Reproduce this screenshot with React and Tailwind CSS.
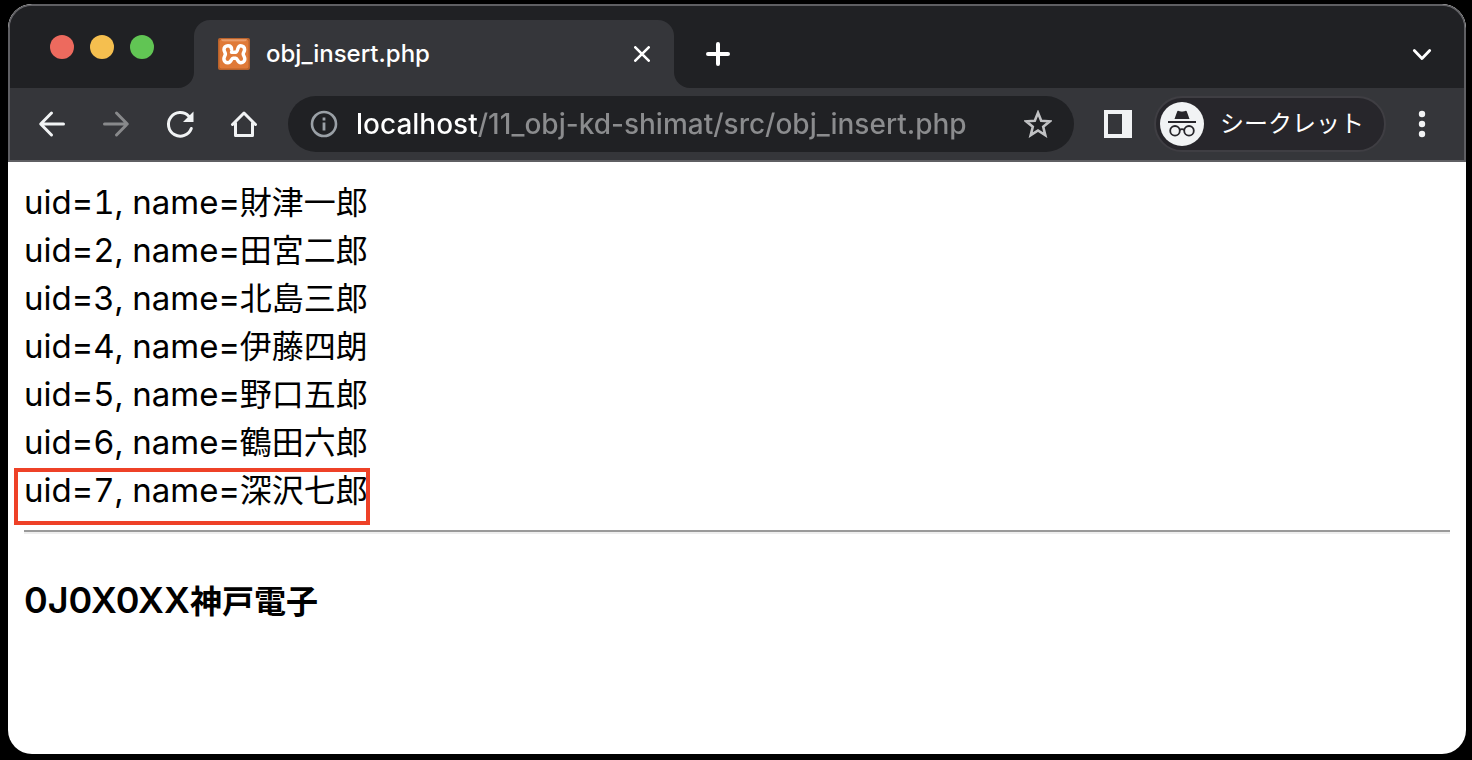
import React from "react";

const rows = [
  { uid: 1, name: "財津一郎" },
  { uid: 2, name: "田宮二郎" },
  { uid: 3, name: "北島三郎" },
  { uid: 4, name: "伊藤四朗" },
  { uid: 5, name: "野口五郎" },
  { uid: 6, name: "鶴田六郎" },
  { uid: 7, name: "深沢七郎", marked: true },
];

function XamppIcon() {
  return (
    <svg viewBox="0 0 32 32" className="size-8 shrink-0" aria-hidden="true">
      <defs>
        <linearGradient id="gloss" x1="0" y1="0" x2="0" y2="1">
          <stop offset="0" stopColor="#f3b58c" />
          <stop offset="1" stopColor="#e07a38" />
        </linearGradient>
      </defs>
      <rect width="32" height="32" rx="2" fill="#b9622b" />
      <rect x="1.5" y="1.5" width="29" height="29" rx="2" fill="#e07a38" />
      <path d="M3 1.500h26c-1 2.500-3 2.500-5 2.500H8C6 4 4 4 3 1.500z" fill="url(#gloss)" />
      <path
        d="M13.600 11.500C13.600 9.200 12.200 7.700 10 7.700C7.600 7.700 6 9.400 6 11.600C6 13.600 7.400 14.500 7.400 16C7.400 17.600 5.900 18.600 5.900 20.900C5.900 23.200 7.600 24.700 9.900 24.700C13.600 24.700 13 20.300 15 20.300H17.800C19.800 20.300 19.200 24.700 22.900 24.700C25.200 24.700 26.800 23.100 26.800 20.900C26.800 18.600 25.200 17.600 25.200 16C25.200 14.500 26.600 13.700 26.600 11.600C26.600 9.300 25 7.700 22.700 7.700C18.800 7.700 20.400 14.200 17.600 14.200H13.500"
        fill="none"
        stroke="#fff"
        strokeWidth="3.500"
        strokeLinecap="round"
        strokeLinejoin="round"
      />
    </svg>
  );
}

function TabFoot({ className, d }) {
  return (
    <svg viewBox="0 0 16 16" className={"absolute bottom-0 size-4 " + className} aria-hidden="true">
      <path d={d} fill="#35363a" />
    </svg>
  );
}

function TabStrip() {
  return (
    <div className="flex h-[82px] items-end bg-[#202124] pl-10 pr-[30px]">
      <div className="mb-[29px] flex gap-4">
        <button aria-label="閉じる" className="size-6 rounded-full bg-[#ed6a5e]" />
        <button aria-label="最小化" className="size-6 rounded-full bg-[#f5bf4f]" />
        <button aria-label="最大化" className="size-6 rounded-full bg-[#61c554]" />
      </div>
      <div className="relative ml-10 flex h-[68px] w-[480px] items-center rounded-t-2xl bg-[#35363a] pl-6 pr-5">
        <TabFoot className="-left-4" d="M16 0V16H0A16 16 0 0 0 16 0z" />
        <XamppIcon />
        <span className="ml-4 flex-1 text-2xl font-medium text-white">obj_insert.php</span>
        <button aria-label="タブを閉じる" className="flex size-6 items-center justify-center">
          <svg viewBox="0 0 16 16" className="size-4" stroke="#fff" strokeWidth="2.600" strokeLinecap="round">
            <path d="M1.300 1.300l13.400 13.400M14.700 1.300L1.300 14.700" />
          </svg>
        </button>
        <TabFoot className="-right-4" d="M0 0V16H16A16 16 0 0 1 0 0z" />
      </div>
      <button aria-label="新しいタブ" className="ml-8 flex h-[68px] items-center">
        <svg viewBox="0 0 24 24" className="size-6" stroke="#fff" strokeWidth="4" strokeLinecap="round">
          <path d="M12 2v20M2 12h20" />
        </svg>
      </button>
      <button aria-label="タブを検索" className="ml-auto flex h-[68px] items-center">
        <svg viewBox="0 0 24 24" className="size-6" fill="none" stroke="#fff" strokeWidth="2.800" strokeLinecap="round" strokeLinejoin="round">
          <path d="M4.300 8.500L12 16.500l7.700-8" />
        </svg>
      </button>
    </div>
  );
}

function NavButton({ label, children }) {
  return (
    <button aria-label={label} className="flex h-14 w-16 items-center justify-center">
      <svg viewBox="0 0 32 32" className="size-8" fill="none" stroke="#f1f3f4" strokeWidth="3" strokeLinecap="round" strokeLinejoin="round">
        {children}
      </svg>
    </button>
  );
}

function Toolbar() {
  return (
    <div className="flex h-[72px] items-center bg-[#35363a] pl-2.5 pr-[30px]">
      <NavButton label="戻る">
        <path d="M27.500 16H5M15.500 5L4.700 16l10.800 11" />
      </NavButton>
      <NavButton label="進む">
        <path d="M4.500 16H27M16.500 5l10.800 11-10.800 11" stroke="#88898b" />
      </NavButton>
      <NavButton label="再読み込み">
        <path d="M27.300 20.500A11.800 11.800 0 1 1 24.800 8.200" />
        <path d="M29.500 3.500V14H19z" fill="#f1f3f4" stroke="none" />
      </NavButton>
      <NavButton label="ホーム">
        <path d="M4.500 16.500L16 5l11.500 11.500M7.500 15v12.500h17V15" />
      </NavButton>
      <div className="ml-3 flex h-14 min-w-0 flex-1 items-center rounded-full bg-[#202124] px-[22px]">
        <svg viewBox="0 0 28 28" className="size-7 shrink-0" fill="none" stroke="#9aa0a6" strokeWidth="2.600" aria-hidden="true">
          <circle cx="14" cy="14" r="12" />
          <path d="M14 12.500v8M14 7.500v3" strokeWidth="2.800" />
        </svg>
        <input
          aria-label="アドレス"
          type="text"
          defaultValue="localhost/11_obj-kd-shimat/src/obj_insert.php"
          className="ml-[18px] h-10 min-w-0 flex-1 bg-[linear-gradient(to_right,#ffffff_121px,#8b8c8e_121px)] bg-clip-text text-[28px] font-medium text-transparent outline-none"
        />
        <button aria-label="ブックマークに追加">
          <svg viewBox="0 0 28 28" className="size-7" fill="none" stroke="#c1c2c4" strokeWidth="2.600" aria-hidden="true">
            <path d="M14 2.800L17.200 10.800L25.800 11.300L19.200 16.800L21.300 25.200L14 20.500L6.700 25.200L8.800 16.800L2.200 11.300L10.800 10.800z" />
          </svg>
        </button>
      </div>
      <button aria-label="サイドパネル" className="ml-[30px]">
        <svg viewBox="0 0 28 28" className="size-7" aria-hidden="true">
          <path d="M0 0h28v28H0zM4 4v20h14V4z" fill="#f1f3f4" fillRule="evenodd" />
        </svg>
      </button>
      <button className="ml-[22px] flex h-14 items-center gap-4 rounded-full border-2 border-[#3f3e43] bg-[#27262b] pl-1 pr-5 text-2xl text-white">
        <svg viewBox="0 0 44 44" className="size-11" aria-hidden="true">
          <circle cx="22" cy="22" r="22" fill="#f1f3f4" />
          <path d="M14.500 17l2.700-7.500c.2-.6.800-.8 1.400-.5l2.400.6c.7.200 1.300.2 2 0l2.400-.6c.6-.3 1.200-.1 1.400.5L29.500 17z" fill="#27262b" />
          <path d="M8 19h28v2H8z" fill="#27262b" />
          <g fill="none" stroke="#27262b" strokeWidth="1.800">
            <circle cx="15" cy="28.800" r="4.800" />
            <circle cx="29" cy="28.800" r="4.800" />
            <path d="M19.500 28c1.500-1 3.500-1 5 0" />
          </g>
        </svg>
        シークレット
      </button>
      <button aria-label="メニュー" className="ml-6">
        <svg viewBox="0 0 24 32" className="h-8 w-6" fill="#f1f3f4" aria-hidden="true">
          <circle cx="12" cy="6" r="3.200" />
          <circle cx="12" cy="16" r="3.200" />
          <circle cx="12" cy="26" r="3.200" />
        </svg>
      </button>
    </div>
  );
}

export default function App() {
  return (
    <div className="flex min-h-screen flex-col bg-black pb-1.5 pl-2 pr-1.5 pt-1 font-[Inter,'Noto_Sans_CJK_JP',sans-serif]">
      <div className="flex flex-1 flex-col overflow-hidden rounded-3xl bg-white">
        <header className="rounded-t-3xl border-2 border-[#5f5f63] bg-[#202124]">
          <div className="overflow-hidden rounded-t-[22px]">
            <TabStrip />
            <Toolbar />
          </div>
        </header>
        <main className="p-4 text-[32px] leading-[48px] text-black">
          {rows.map((row) => (
            <div key={row.uid} className="h-12">
              <span className="relative inline-block">
                <span className="text-[33px] tabular-nums">
                  uid={row.uid}, name=
                </span>
                {row.name}
                {row.marked && (
                  <span className="absolute -bottom-2.5 -left-2.5 -right-0.5 top-0.5 border-4 border-[#ee4127]" />
                )}
              </span>
            </div>
          ))}
          <hr className="my-4 border-b-2 border-t-2 border-b-[#eeeeee] border-t-[#9a9a9a]" />
          <h1 className="mt-[42px] font-bold">
            <span className="text-[36px] font-semibold">0J0X0XX</span>神戸電子
          </h1>
        </main>
      </div>
    </div>
  );
}
